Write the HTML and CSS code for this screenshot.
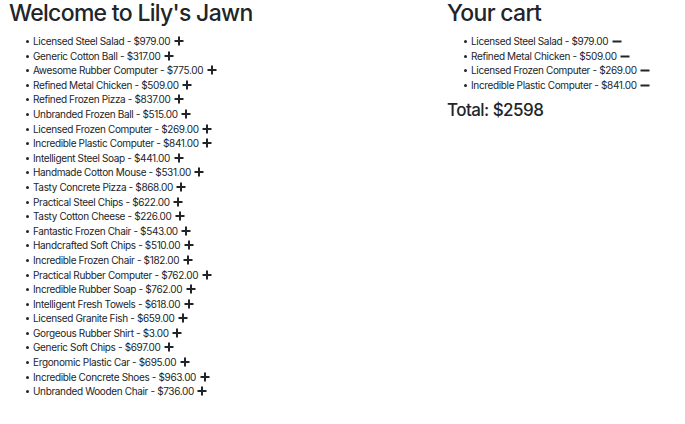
FILE: index.html
```html
<!DOCTYPE html>
<html>
<head>
<meta charset="utf-8">
<link rel="stylesheet" href="styles.css">
</head>
<body>
<div class="page">
  <section class="shop">
    <h1 class="title">Welcome to Lily's Jawn</h1>
    <ul class="items" id="shop-list"></ul>
  </section>
  <section class="cart">
    <h1 class="title">Your cart</h1>
    <ul class="items" id="cart-list"></ul>
    <h2 class="total">Total: $2598</h2>
  </section>
</div>
<script src="app.js"></script>
</body>
</html>
```
FILE: styles.css
```css
* { box-sizing: border-box; }
body {
  margin: 0;
  font-family: Inter, "Liberation Sans", sans-serif;
  color: #212529;
  background: #fff;
}
.page {
  display: flex;
  padding: 0 0 0 9px;
}
.shop { width: 438px; }
.cart { flex: 1; }
.title {
  margin: 0 0 7px;
  font-size: 23px;
  font-weight: 500;
  line-height: 27px;
  letter-spacing: -0.7px;
}
.items {
  margin: 0;
  padding-left: 24px;
  list-style: none;
  font-size: 10px;
  line-height: 14.6px;
  letter-spacing: -0.35px;
}
.items li {
  position: relative;
  white-space: nowrap;
}
.items li::before {
  content: "";
  position: absolute;
  left: -7px;
  top: 6px;
  width: 3px;
  height: 3px;
  border-radius: 50%;
  background: #212529;
}
.icon {
  display: inline-block;
  vertical-align: -1px;
  margin-left: 1px;
}
.total {
  margin: 7px 0 0;
  font-size: 17px;
  font-weight: 500;
  line-height: 22px;
  letter-spacing: -0.55px;
}
```
FILE: app.js
```js
const shop = [
  ["Licensed Steel Salad", "979.00"],
  ["Generic Cotton Ball", "317.00"],
  ["Awesome Rubber Computer", "775.00"],
  ["Refined Metal Chicken", "509.00"],
  ["Refined Frozen Pizza", "837.00"],
  ["Unbranded Frozen Ball", "515.00"],
  ["Licensed Frozen Computer", "269.00"],
  ["Incredible Plastic Computer", "841.00"],
  ["Intelligent Steel Soap", "441.00"],
  ["Handmade Cotton Mouse", "531.00"],
  ["Tasty Concrete Pizza", "868.00"],
  ["Practical Steel Chips", "622.00"],
  ["Tasty Cotton Cheese", "226.00"],
  ["Fantastic Frozen Chair", "543.00"],
  ["Handcrafted Soft Chips", "510.00"],
  ["Incredible Frozen Chair", "182.00"],
  ["Practical Rubber Computer", "762.00"],
  ["Incredible Rubber Soap", "762.00"],
  ["Intelligent Fresh Towels", "618.00"],
  ["Licensed Granite Fish", "659.00"],
  ["Gorgeous Rubber Shirt", "3.00"],
  ["Generic Soft Chips", "697.00"],
  ["Ergonomic Plastic Car", "695.00"],
  ["Incredible Concrete Shoes", "963.00"],
  ["Unbranded Wooden Chair", "736.00"]
];
const cart = [
  ["Licensed Steel Salad", "979.00"],
  ["Refined Metal Chicken", "509.00"],
  ["Licensed Frozen Computer", "269.00"],
  ["Incredible Plastic Computer", "841.00"]
];
const plus = '<svg class="icon" width="10" height="10" viewBox="0 0 10 10"><path d="M5 0.5v9M0.5 5h9" stroke="#212529" stroke-width="2"/></svg>';
const minus = '<svg class="icon" width="10" height="10" viewBox="0 0 10 10"><path d="M0.5 5.5h9" stroke="#212529" stroke-width="2"/></svg>';
function fill(id, list, icon) {
  document.getElementById(id).innerHTML = list
    .map(([n, p]) => `<li>${n} - $${p} ${icon}</li>`)
    .join("");
}
fill("shop-list", shop, plus);
fill("cart-list", cart, minus);
```
